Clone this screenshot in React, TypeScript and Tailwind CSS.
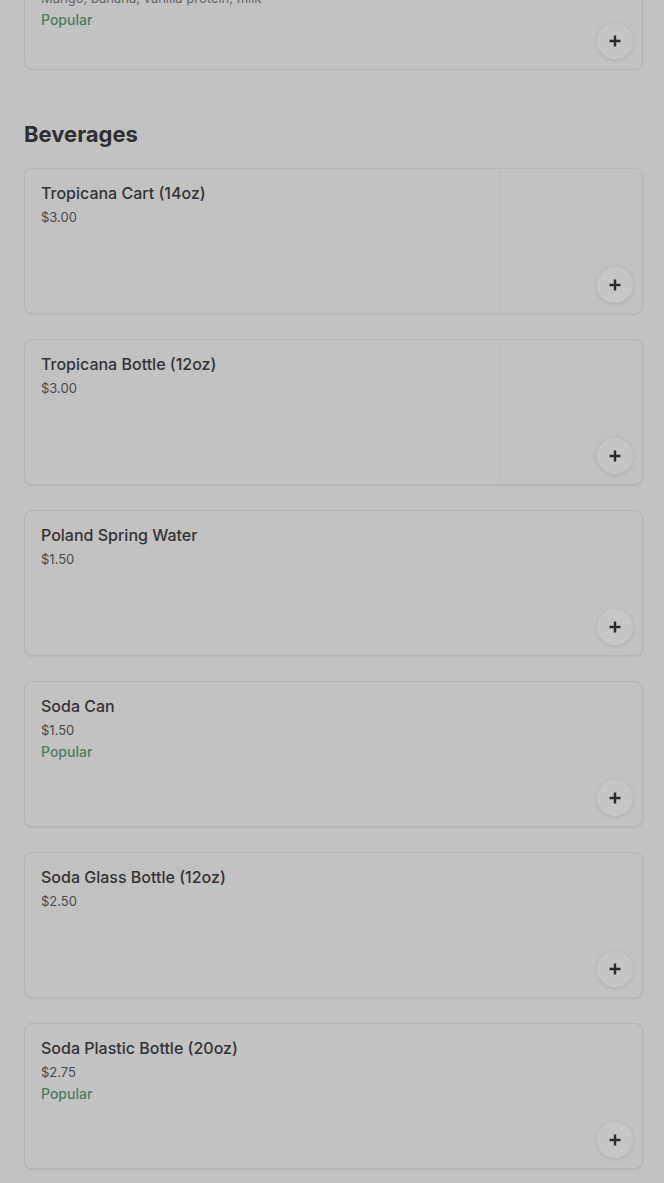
import React from "react";

type Item = {
  name: string;
  price: string;
  desc?: string;
  popular?: boolean;
  image?: boolean;
};

const beverages: Item[] = [
  { name: "Tropicana Cart (14oz)", price: "$3.00", image: true },
  { name: "Tropicana Bottle (12oz)", price: "$3.00", image: true },
  { name: "Poland Spring Water", price: "$1.50" },
  { name: "Soda Can", price: "$1.50", popular: true },
  { name: "Soda Glass Bottle (12oz)", price: "$2.50" },
  { name: "Soda Plastic Bottle (20oz)", price: "$2.75", popular: true },
];

function PlusIcon() {
  return (
    <svg width="12" height="12" viewBox="0 0 12 12" fill="none">
      <path d="M6 0.5v11M0.5 6h11" stroke="#2b2b2b" strokeWidth="2.4" />
    </svg>
  );
}

function AddButton() {
  return (
    <button className="absolute right-[9px] bottom-[10px] flex h-9 w-9 items-center justify-center rounded-full bg-[#c6c6c6] shadow-[0_1px_4px_rgba(0,0,0,0.1)]">
      <PlusIcon />
    </button>
  );
}

function ItemCard({ item }: { item: Item }) {
  return (
    <div className="relative flex h-[146px] rounded-lg border border-[#b6b6b6] bg-[#c2c2c2] shadow-[0_1px_2px_rgba(0,0,0,0.06)]">
      <div className="flex-1 px-4 pt-3">
        <div className="text-[16px] leading-6 font-medium text-[#333333]">{item.name}</div>
        <div className="mt-[2px] text-[13px] leading-5 text-[#4a4a4a]">{item.price}</div>
        {item.desc && (
          <div className="mt-[2px] text-[13px] leading-5 text-[#666666]">{item.desc}</div>
        )}
        {item.popular && (
          <div className="mt-[2px] text-[14px] leading-5 font-medium text-[#4b7d62]">Popular</div>
        )}
      </div>
      {item.image && (
        <div className="w-[142px] rounded-r-lg border-l border-[#bdbdbd] bg-[#c1c1c1]" />
      )}
      <AddButton />
    </div>
  );
}

export default function App() {
  return (
    <div
      className="min-h-[1183px] overflow-hidden bg-[#c2c2c2] pl-6 pr-[21px]"
      style={{ fontFamily: "Inter, 'Liberation Sans', sans-serif" }}
    >
      <div className="-mt-[76px]">
        <div className="relative flex h-[146px] rounded-lg border border-[#b6b6b6] bg-[#c2c2c2]">
          <div className="flex-1 px-4 pt-[15px]">
            <div className="text-[16px] leading-6 font-medium text-[#333333]">Protein Smoothie</div>
            <div className="mt-[2px] text-[13px] leading-5 text-[#4a4a4a]">$7.50</div>
            <div className="mt-[2px] text-[13px] leading-5 text-[#666666]">Mango, banana, vanilla protein, milk</div>
            <div className="mt-[2px] text-[14px] leading-5 font-medium text-[#4b7d62]">Popular</div>
          </div>
          <AddButton />
        </div>
      </div>

      <h2 className="mt-12 text-[22px] leading-8 font-bold text-[#2f2f2f]">Beverages</h2>

      <div className="mt-[18px] flex flex-col gap-[25px]">
        {beverages.map((item) => (
          <ItemCard key={item.name} item={item} />
        ))}
      </div>
    </div>
  );
}
